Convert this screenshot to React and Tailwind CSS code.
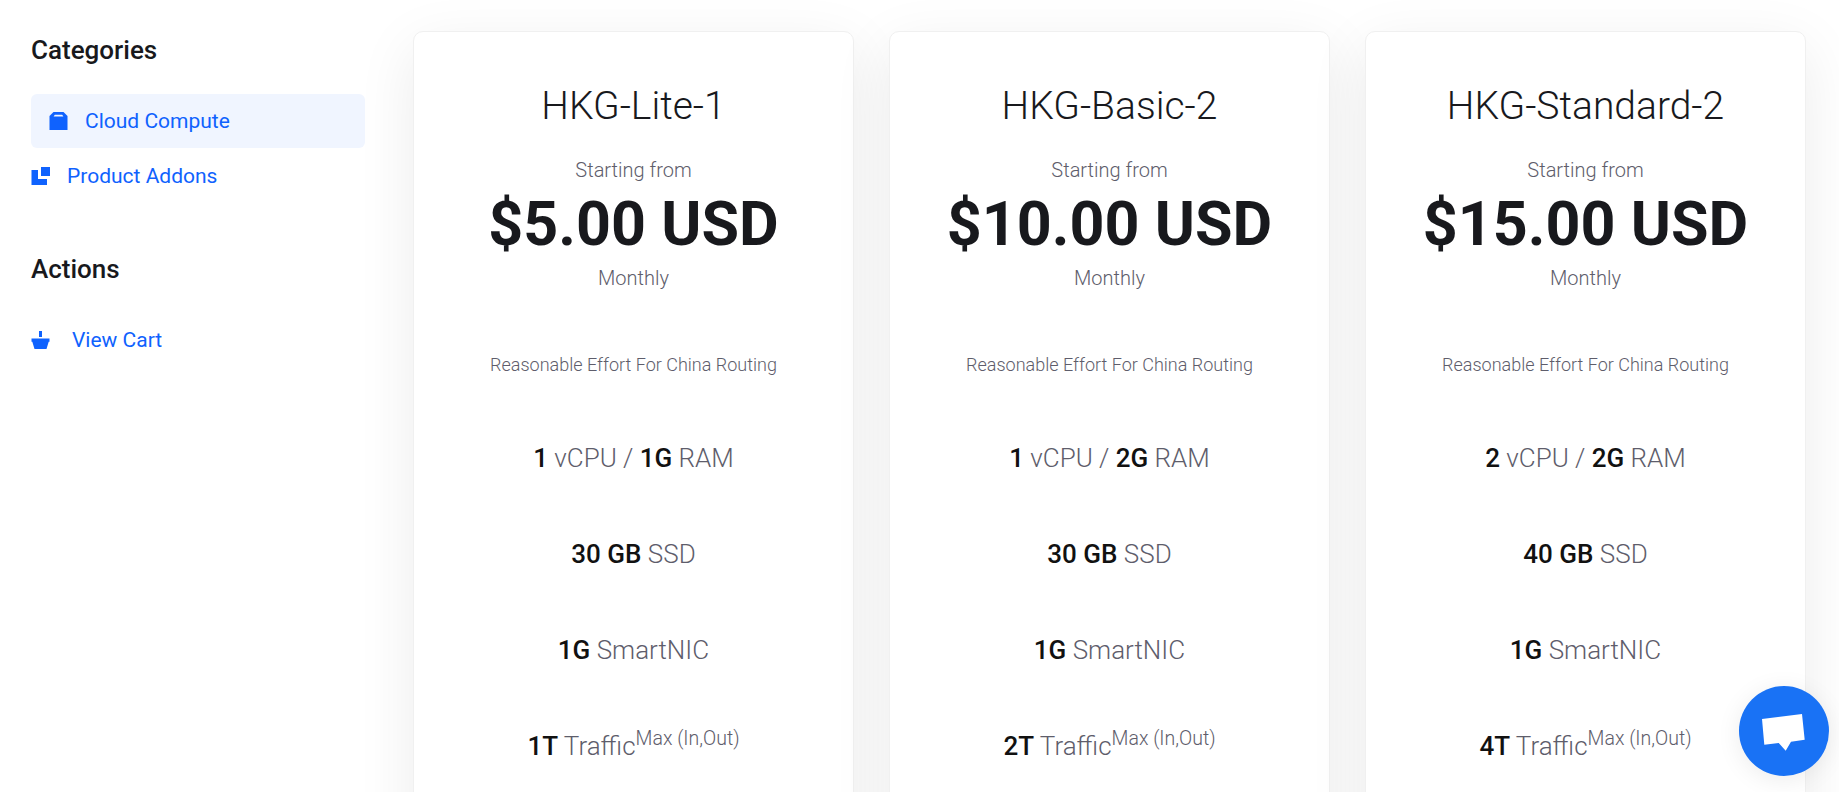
const plans = [
  { name: "HKG-Lite-1", price: "$5.00 USD", cpu: "1", ram: "1G", disk: "30 GB", nic: "1G", traffic: "1T" },
  { name: "HKG-Basic-2", price: "$10.00 USD", cpu: "1", ram: "2G", disk: "30 GB", nic: "1G", traffic: "2T" },
  { name: "HKG-Standard-2", price: "$15.00 USD", cpu: "2", ram: "2G", disk: "40 GB", nic: "1G", traffic: "4T" },
];

function BoxIcon() {
  return (
    <svg className="w-[19px] h-[18px] shrink-0" viewBox="0 0 19 18" fill="currentColor" aria-hidden="true">
      <path fillRule="evenodd" d="M4.5 0h10L18.5 4v14H0.5V4zM5.8 2.8L4.6 4.6h9.8l-1.200-1.800z" />
    </svg>
  );
}

function AddonsIcon() {
  return (
    <svg className="w-[19px] h-[18px] shrink-0" viewBox="0 0 19 18" fill="currentColor" aria-hidden="true">
      <path d="M10 0h9v9h-9z" />
      <path d="M0.5 3H7v9h9v6H0.5z" />
    </svg>
  );
}

function CartIcon() {
  return (
    <svg className="w-[19px] h-[18px] shrink-0" viewBox="0 0 19 18" fill="currentColor" aria-hidden="true">
      <path d="M8 0h3v6H8z" />
      <path d="M0.5 7.5h18v3.3h-0.8L15.5 18h-12L1.3 10.8H0.5z" />
    </svg>
  );
}

function Sidebar() {
  return (
    <aside className="w-[334px] shrink-0">
      <h2 className="text-[26px] leading-[38px] font-medium">Categories</h2>
      <nav className="mt-[25px] flex flex-col gap-px text-[21px] leading-[54px] text-[#0f62fe]">
        <a href="#cloud" className="flex items-center gap-[17px] rounded-md bg-[#f0f5ff] pl-[18px]">
          <BoxIcon /> Cloud Compute
        </a>
        <a href="#addons" className="flex items-center gap-[17px]">
          <AddonsIcon /> Product Addons
        </a>
      </nav>

      <h2 className="mt-[47px] text-[26px] leading-[38px] font-medium">Actions</h2>
      <nav className="mt-[25px] text-[21px] leading-[54px] text-[#0f62fe]">
        <a href="#cart" className="flex items-center gap-[22px]">
          <CartIcon /> View Cart
        </a>
      </nav>
    </aside>
  );
}

function PlanCard({ plan }) {
  return (
    <article className="rounded-[10px] border border-[#f0f0f0] bg-white pt-[50px] pb-20 text-center font-light text-[#5e5d6b] shadow-[0_16px_60px_rgba(0,0,0,0.08)]">
      <h3 className="text-[39px] leading-[48px] text-[#18191d]">{plan.name}</h3>

      <div className="mt-[25px] text-xl leading-[30px]">
        <p>Starting from</p>
        <p className="text-[61px] leading-[78px] font-bold text-[#18191d]">{plan.price}</p>
        <p>Monthly</p>
      </div>

      <p className="mt-[58px] text-lg leading-7">Reasonable Effort For China Routing</p>

      <ul className="mt-[59px] flex flex-col gap-14 text-[26px] leading-10 [&_b]:font-medium [&_b]:text-[#111111]">
        <li><b>{plan.cpu}</b> vCPU / <b>{plan.ram}</b> RAM</li>
        <li><b>{plan.disk}</b> SSD</li>
        <li><b>{plan.nic}</b> SmartNIC</li>
        <li><b>{plan.traffic}</b> Traffic<sup>Max (In,Out)</sup></li>
      </ul>
    </article>
  );
}

export default function App() {
  return (
    <div className="min-h-screen bg-white font-['Roboto',sans-serif] text-[#18191d]">
      <div className="flex gap-12 pt-[31px] pr-[33px] pb-16 pl-[31px]">
        <Sidebar />
        <main className="grid flex-1 grid-cols-3 gap-[35px]">
          {plans.map((plan) => (
            <PlanCard key={plan.name} plan={plan} />
          ))}
        </main>
      </div>

      {/* chat launcher */}
      <button
        type="button"
        aria-label="Open chat"
        className="fixed right-[10px] bottom-4 size-[90px] rounded-full bg-[#1972f5] shadow-[0_4px_24px_rgba(0,0,0,0.08)]"
      >
        <svg viewBox="0 0 90 90" className="size-full" fill="white" aria-hidden="true">
          <path d="M23 33L63 28L65.7 53.7L52 55.7L46.7 64.7L39.7 57L25.3 58.7Z" />
        </svg>
      </button>
    </div>
  );
}
